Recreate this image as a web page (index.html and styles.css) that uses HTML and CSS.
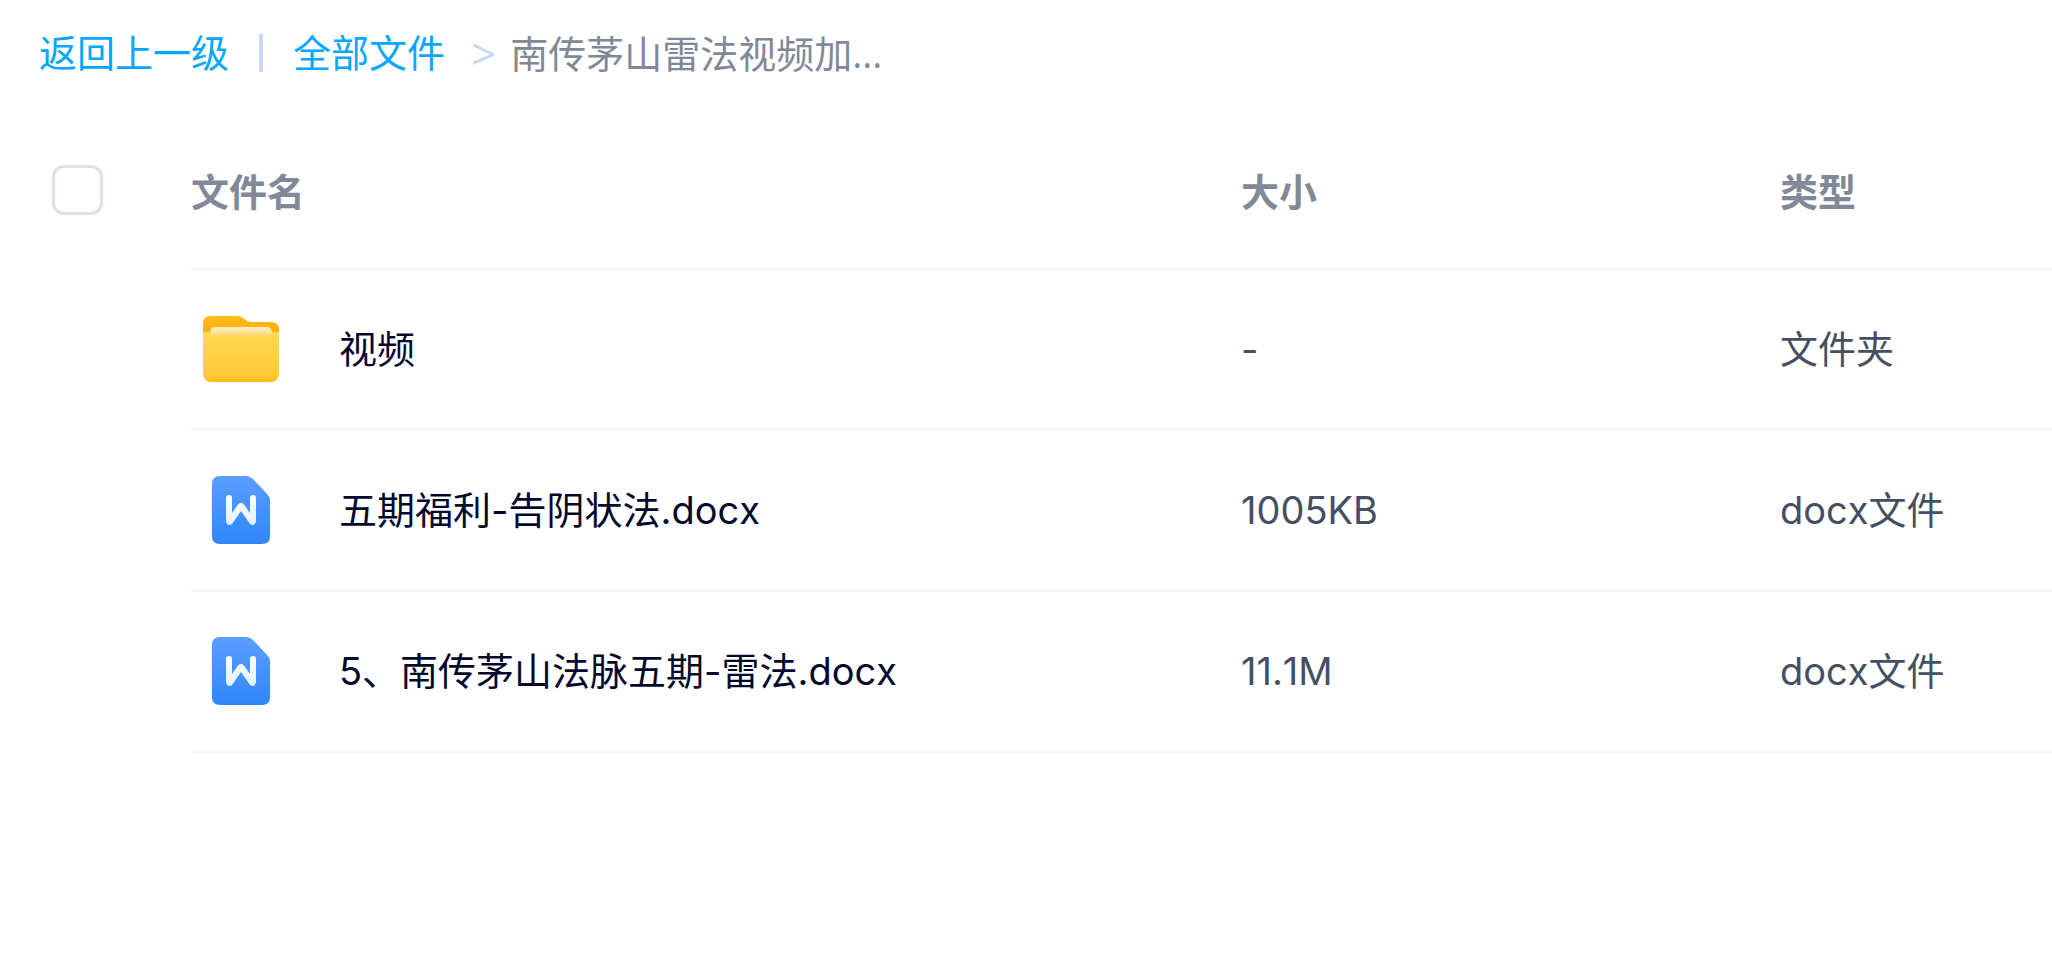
FILE: index.html
```html
<!DOCTYPE html>
<html lang="zh-CN">
<head>
<meta charset="utf-8">
<title>全部文件</title>
<link rel="stylesheet" href="styles.css">
</head>
<body>
<svg class="defs" width="0" height="0" aria-hidden="true">
  <defs>
    <linearGradient id="doc-fill" x1="0" y1="0" x2="0" y2="1"><stop offset="0" stop-color="#5b9eff"/><stop offset="1" stop-color="#2f86fb"/></linearGradient>
    <linearGradient id="letter-fill" x1="0" y1="0" x2="0" y2="1"><stop offset="0" stop-color="#fff"/><stop offset="1" stop-color="#e3efff"/></linearGradient>
    <linearGradient id="folder-back" x1="0" y1="0" x2="0" y2="1"><stop offset="0" stop-color="#ffbb1c"/><stop offset="1" stop-color="#ffa80a"/></linearGradient>
    <linearGradient id="folder-front" x1="0" y1="0" x2="0" y2="1"><stop offset="0" stop-color="#ffd955"/><stop offset="0.9" stop-color="#ffc832"/><stop offset="1" stop-color="#ffb90f"/></linearGradient>
    <linearGradient id="folder-paper" x1="0" y1="0" x2="0" y2="1"><stop offset="0" stop-color="#fff0cf"/><stop offset="1" stop-color="#ffd766"/></linearGradient>
    <symbol id="icon-folder" viewBox="0 0 100 100">
      <path fill="url(#folder-back)" d="M12 40V24q0-7 8-7h26q4 0 6 2l3 2q2 2 5 2h20q8 0 8 8v9z"/>
      <path fill="url(#folder-front)" d="M12 33H88V74q0 9-9 9H21q-9 0-9-9z"/>
      <path fill="url(#folder-paper)" d="M19 37v-4q0-5 6-5h50q6 0 6 5v4z"/>
    </symbol>
    <symbol id="icon-doc" viewBox="0 0 100 100">
      <path fill="url(#doc-fill)" d="M29 16h26q4 0 7 3l14 15q3 3 3 6v36q0 8-8 8H29q-8 0-8-8V24q0-8 8-8z"/>
      <path fill="url(#letter-fill)" d="M35 38a3 3 0 0 1 6 0V53L47 44.500Q50 41 53 44.500L59 53V38a3 3 0 0 1 6 0V61q-1 6-6 3L50 51L41 64q-5 3-6-3z"/>
    </symbol>
  </defs>
</svg>

<nav class="crumbs" aria-label="路径">
  <a class="crumb-link" href="#">返回上一级</a>
  <span class="crumb-bar"></span>
  <a class="crumb-link" href="#">全部文件</a>
  <span class="crumb-arrow">&gt;</span>
  <span class="crumb-current">南传茅山雷法视频加...</span>
</nav>

<table class="files">
  <colgroup><col class="col-check"><col><col class="col-size"><col class="col-type"></colgroup>
  <thead>
    <tr>
      <th class="check-cell"><input class="check" type="checkbox" aria-label="全选"></th>
      <th>文件名</th><th>大小</th><th>类型</th>
    </tr>
  </thead>
  <tbody>
    <tr>
      <td class="check-cell"></td>
      <td><a class="file" href="#"><svg class="file-icon"><use href="#icon-folder"/></svg><span>视频</span></a></td>
      <td>-</td><td>文件夹</td>
    </tr>
    <tr>
      <td class="check-cell"></td>
      <td><a class="file" href="#"><svg class="file-icon"><use href="#icon-doc"/></svg><span>五期福利-告阴状法.docx</span></a></td>
      <td>1005KB</td><td>docx文件</td>
    </tr>
    <tr>
      <td class="check-cell"></td>
      <td><a class="file" href="#"><svg class="file-icon"><use href="#icon-doc"/></svg><span>5、南传茅山法脉五期-雷法.docx</span></a></td>
      <td>11.1M</td><td>docx文件</td>
    </tr>
  </tbody>
</table>
</body>
</html>
```
FILE: styles.css
```css
* {
  box-sizing: border-box;
}

body {
  margin: 0;
  background: #fff;
  color: #454f63;
  font-family: Inter, "Noto Sans CJK SC", sans-serif;
  font-size: 38px;
  font-kerning: none;
  line-height: 56px;
}

a {
  text-decoration: none;
}

.defs {
  position: absolute;
}

.crumbs {
  display: flex;
  align-items: center;
  padding: 25px 39px 0;
  white-space: nowrap;
}

.crumb-link {
  color: #06a7ff;
}

.crumb-bar {
  width: 4px;
  height: 38px;
  margin: 0 30px;
  background: #c4d8f4;
}

.crumb-arrow {
  margin: 0 14px 0 26px;
  color: #c4d8f4;
  font-family: "Open Sans", sans-serif;
  font-size: 44px;
}

.crumb-current {
  color: #818999;
  font-family: "Open Sans", "Noto Sans CJK SC", sans-serif;
}

.files {
  width: 100%;
  margin-top: 35px;
  border-collapse: separate;
  border-spacing: 0;
  table-layout: fixed;
}

.col-check {
  width: 191px;
}

.col-size {
  width: 539px;
}

.col-type {
  width: 272px;
}

th,
td {
  height: 161px;
  padding: 0;
  border-bottom: 3px solid #f7f8f9;
  text-align: left;
  vertical-align: middle;
  white-space: nowrap;
}

th {
  height: 154px;
  color: #818999;
  font-weight: 700;
}

.check-cell {
  padding: 0 0 6px 52px;
  border-bottom: 0;
}

.check {
  display: block;
  width: 51px;
  height: 50px;
  margin: 0;
  border: 3px solid #dce0e8;
  border-radius: 12px;
  background: #fff;
  appearance: none;
}

.file {
  display: flex;
  align-items: center;
  gap: 48px;
  color: #03082c;
}

.file-icon {
  flex: none;
  width: 100px;
  height: 100px;
}
```
